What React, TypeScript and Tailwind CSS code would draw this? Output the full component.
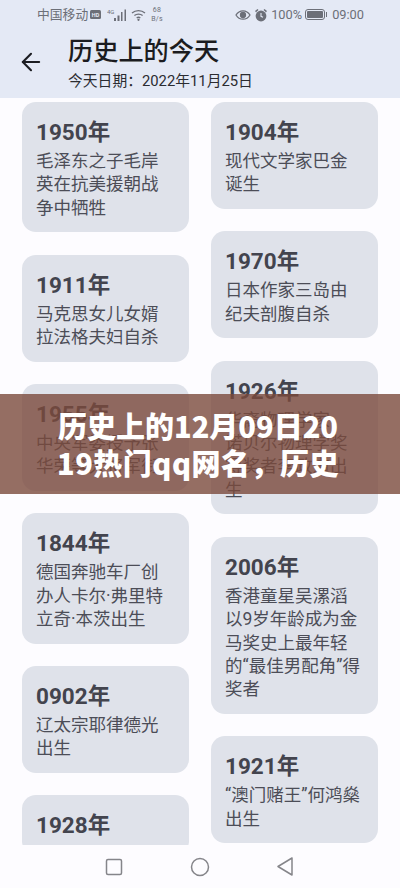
import { ArrowLeft } from "lucide-react";

type Item = { year: string; lines: string[] };

const leftCol: Item[] = [
  { year: "1950年", lines: ["毛泽东之子毛岸", "英在抗美援朝战", "争中牺牲"] },
  { year: "1911年", lines: ["马克思女儿女婿", "拉法格夫妇自杀"] },
  { year: "1955年", lines: ["中央军委授予张", "华荣等大将军衔"] },
  { year: "1844年", lines: ["德国奔驰车厂创", "办人卡尔·弗里特", "立奇·本茨出生"] },
  { year: "0902年", lines: ["辽太宗耶律德光", "出生"] },
  { year: "1928年", lines: [] },
];

const rightCol: Item[] = [
  { year: "1904年", lines: ["现代文学家巴金", "诞生"] },
  { year: "1970年", lines: ["日本作家三岛由", "纪夫剖腹自杀"] },
  { year: "1926年", lines: ["华裔物理学家、", "诺贝尔物理学奖", "得奖者李政道出", "生"] },
  { year: "2006年", lines: ["香港童星吴漯滔", "以9岁年龄成为金", "马奖史上最年轻", "的“最佳男配角”得", "奖者"] },
  { year: "1921年", lines: ["“澳门赌王”何鸿燊", "出生"] },
];

function Card({ item }: { item: Item }) {
  return (
    <div className="shrink-0 rounded-[14px] bg-[#dfe2ea] pl-[14px] pr-2 pt-[15px] pb-[12px]">
      <div className="h-[30px] text-[22.5px] leading-[30px] font-bold text-[#43444e]">{item.year}</div>
      <div className="mt-[3px] text-[17.5px] leading-[23.4px] whitespace-nowrap text-[#4c4d57]">
        {item.lines.map((line) => (
          <div key={line}>{line}</div>
        ))}
      </div>
    </div>
  );
}

export default function App() {
  return (
    <div lang="zh-CN" className="relative flex h-[888px] w-[400px] flex-col overflow-hidden bg-[#fdfcff] font-['Roboto','Noto_Sans_CJK_SC',sans-serif]">
      <header className="h-[98px] shrink-0 bg-[#e4e9f5]">
        <div className="flex h-[29px] items-center justify-between pl-[37px] pr-[36px] text-[#6c6f78]">
          <div className="flex items-center">
            <span className="text-[12.8px]">中国移动</span>
            <svg className="ml-[2px]" width="11" height="9" viewBox="0 0 11 9">
              <rect width="11" height="9" rx="1.5" fill="#6c6f78" />
              <text x="5.5" y="6.5" textAnchor="middle" fontSize="5.5" fontWeight="700" fill="#e4e9f5">HD</text>
            </svg>
            <svg className="ml-[6px]" width="20" height="14" viewBox="0 0 20 14" fill="#6c6f78">
              <rect x="7" y="10" width="2" height="3" />
              <rect x="10.5" y="7.5" width="2" height="5.5" />
              <rect x="14" y="4" width="1.5" height="9" />
              <rect x="17.5" y="1.5" width="1.5" height="11.5" />
              <text x="0" y="6" fontSize="6">4G</text>
            </svg>
            <svg className="ml-[4px]" width="15" height="12" viewBox="0 0 15 12" fill="none" stroke="#6c6f78" strokeWidth="1.3">
              <path d="M1 4c3.6-3.2 9.4-3.2 13 0" />
              <path d="M3.4 6.6c2.3-2 5.9-2 8.2 0" />
              <path d="M5.7 9c1-.8 2.6-.8 3.6 0" />
              <circle cx="7.5" cy="10.8" r=".5" fill="#6c6f78" />
            </svg>
            <div className="ml-[5px] flex flex-col items-center text-[7px] leading-[9px] tracking-[0.3px]">
              <span>68</span>
              <span>B/s</span>
            </div>
          </div>
          <div className="flex items-center">
            <svg width="16" height="12" viewBox="0 0 16 12" fill="none" stroke="#6c6f78" strokeWidth="1.3">
              <path d="M1 6c3.4-5.6 10.6-5.6 14 0-3.4 5.6-10.6 5.6-14 0z" />
              <circle cx="8" cy="6" r="2.5" fill="#6c6f78" />
            </svg>
            <svg className="ml-[3px]" width="14" height="14" viewBox="0 0 14 14" fill="#6c6f78">
              <circle cx="7" cy="8" r="5.4" />
              <path d="M1 3l2.5-2 1 1L2 4.2zM13 3l-2.5-2-1 1L12 4.2z" />
              <path d="M7 5v3.3l2 1" fill="none" stroke="#e4e9f5" strokeWidth="1.1" />
            </svg>
            <span className="ml-[3px] text-[12.8px]">100%</span>
            <div className="ml-[3px] flex items-center">
              <div className="h-[11px] w-[20px] rounded-[3px] border border-[#6c6f78] p-[1px]">
                <div className="h-full w-full rounded-[1px] bg-[#6c6f78]" />
              </div>
              <div className="ml-[1px] h-[5px] w-[1px] bg-[#6c6f78]" />
            </div>
            <span className="ml-[5px] text-[12.8px]">09:00</span>
          </div>
        </div>
        <div className="flex items-start">
          <ArrowLeft className="ml-[17px] mt-[19px] text-[#1c1d22]" size={28} strokeWidth={1.8} />
          <div className="ml-[23px] mt-[5px]">
            <div className="text-[25.2px] leading-[36px] font-medium text-[#1b1c20]">历史上的今天</div>
            <div className="mt-[1px] text-[14.8px] leading-[20px] text-[#2b2c31]">今天日期：2022年11月25日</div>
          </div>
        </div>
      </header>

      <main className="flex min-h-0 flex-1 gap-[22px] overflow-hidden px-[22px] pt-[4px]">
        <div className="flex w-[167px] flex-col gap-[22.5px]">
          {leftCol.map((item) => (
            <Card key={item.year} item={item} />
          ))}
        </div>
        <div className="flex w-[167px] flex-col gap-[22.5px]">
          {rightCol.map((item) => (
            <Card key={item.year} item={item} />
          ))}
        </div>
      </main>

      <nav className="flex h-[43px] shrink-0 items-center justify-center bg-[#fdfcff] pr-[2px]">
        <div className="flex items-center gap-[67px]">
          <svg width="18" height="18" viewBox="0 0 18 18" fill="none" stroke="#85858a" strokeWidth="1.5">
            <rect x="1.5" y="1.5" width="15" height="15" rx="1.5" />
          </svg>
          <svg width="20" height="20" viewBox="0 0 20 20" fill="none" stroke="#85858a" strokeWidth="1.5">
            <circle cx="10" cy="10" r="8.5" />
          </svg>
          <svg width="16" height="19" viewBox="0 0 16 19" fill="none" stroke="#85858a" strokeWidth="1.5" strokeLinejoin="round">
            <path d="M15 1v17L1 9.5z" />
          </svg>
        </div>
      </nav>

      <div className="absolute inset-x-0 top-[394px] h-[100px] bg-[#7a4a3c]/80 pl-[52px] pr-[56px] pt-[13px] text-center font-['Noto_Sans_CJK_SC',sans-serif] text-[29px] leading-[37px] font-black break-all text-white">
        历史上的12月09日20<span className="tracking-[0.5px]">19热门qq网名，历史</span>
      </div>
    </div>
  );
}
